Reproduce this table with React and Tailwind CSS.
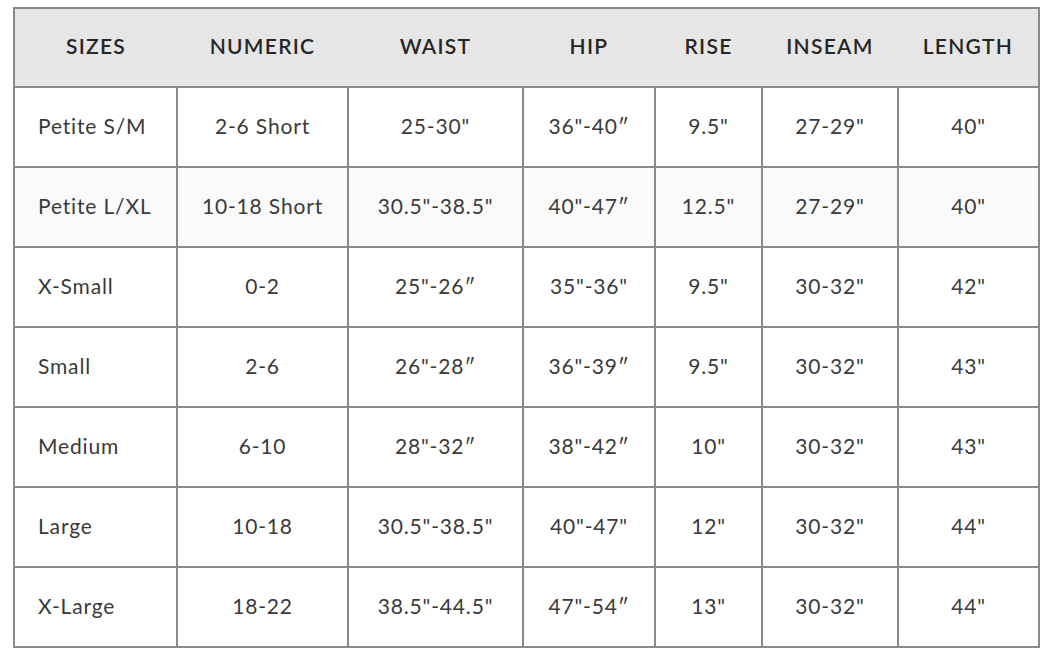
const headers = ["SIZES", "NUMERIC", "WAIST", "HIP", "RISE", "INSEAM", "LENGTH"];
const widths = ["w-[163px]", "w-[171px]", "w-[175px]", "w-[132px]", "w-[107px]", "w-[136px]", "w-[141px]"];

const rows = [
  ["Petite S/M", "2-6 Short", "25-30\"", "36\"-40″", "9.5\"", "27-29\"", "40\""],
  ["Petite L/XL", "10-18 Short", "30.5\"-38.5\"", "40\"-47″", "12.5\"", "27-29\"", "40\""],
  ["X-Small", "0-2", "25\"-26″", "35\"-36\"", "9.5\"", "30-32\"", "42\""],
  ["Small", "2-6", "26\"-28″", "36\"-39″", "9.5\"", "30-32\"", "43\""],
  ["Medium", "6-10", "28\"-32″", "38\"-42″", "10\"", "30-32\"", "43\""],
  ["Large", "10-18", "30.5\"-38.5\"", "40\"-47\"", "12\"", "30-32\"", "44\""],
  ["X-Large", "18-22", "38.5\"-44.5\"", "47\"-54″", "13\"", "30-32\"", "44\""],
];

export default function App() {
  return (
    <div className="min-h-screen bg-white pl-[13px] pt-[7px] font-['Lato','Liberation_Sans',sans-serif]">
      <table className="w-[1025px] table-fixed border-collapse border-2 border-[#8a8a8a]">
        <thead>
          <tr className="h-[79px] bg-[#e6e6e6]">
            {headers.map((h, i) => (
              <th
                key={h}
                className={`${widths[i]} border-b-2 border-[#8a8a8a] pb-[4px] text-center text-[21px] font-semibold tracking-[0.06em] text-[#262626]`}
              >
                {h}
              </th>
            ))}
          </tr>
        </thead>
        <tbody>
          {rows.map((r, ri) => (
            <tr key={ri} className={`h-[80px] ${ri === 1 ? "bg-[#fafafa]" : "bg-white"}`}>
              {r.map((c, ci) => (
                <td
                  key={ci}
                  className={`border-2 border-[#8a8a8a] pb-[3px] text-[21px] tracking-[0.04em] text-[#3a3a3a] ${
                    ci === 0 ? "pl-[23px] text-left" : "text-center"
                  }`}
                >
                  {c}
                </td>
              ))}
            </tr>
          ))}
        </tbody>
      </table>
    </div>
  );
}
